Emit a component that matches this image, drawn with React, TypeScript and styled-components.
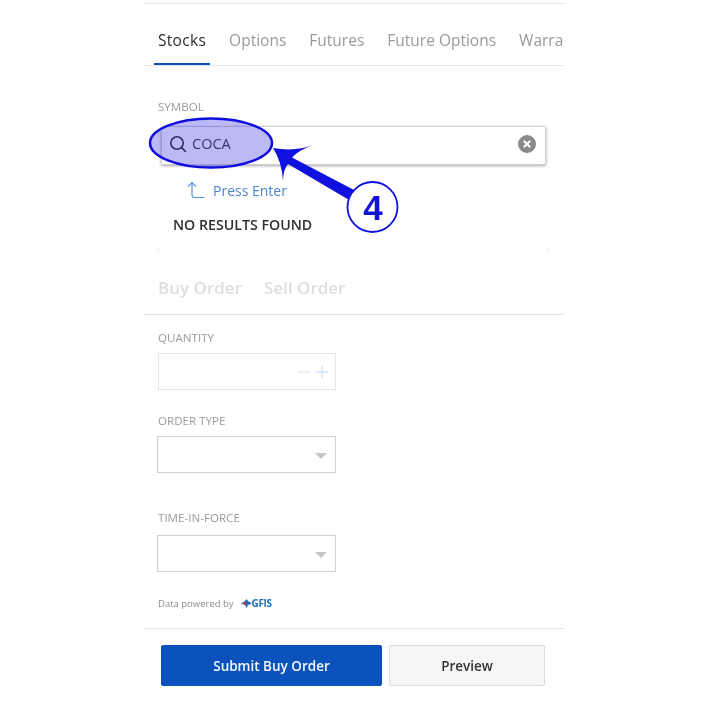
import styled, { createGlobalStyle } from "styled-components";

const GlobalStyle = createGlobalStyle`
  html, body {
    margin: 0;
    padding: 0;
    background: #fff;
  }
  body {
    font-family: "Open Sans", "Liberation Sans", sans-serif;
  }
`;

const Page = styled.div`
  position: relative;
  width: 705px;
  height: 705px;
  overflow: hidden;
  background: #fff;
  filter: blur(0.35px);
`;

const Panel = styled.div`
  width: 421px;
  margin-left: 143px;
  padding-top: 3px;
  display: flex;
  flex-direction: column;
`;

const TabBar = styled.div`
  height: 63px;
  box-sizing: border-box;
  border-top: 1px solid #e6e6e6;
  border-bottom: 1px solid #e2e4e8;
  padding-left: 11px;
  display: flex;
  overflow: hidden;
  white-space: nowrap;
`;

const Tab = styled.div<{ $active?: boolean }>`
  padding: 0 4px;
  margin-right: 15px;
  height: 62px;
  box-sizing: border-box;
  line-height: 72px;
  font-size: 15.5px;
  color: ${(p) => (p.$active ? "#2f2f33" : "#9a9a9a")};
  font-weight: ${(p) => (p.$active ? 500 : 400)};
  letter-spacing: ${(p) => (p.$active ? "0.3px" : "0")};
  border-bottom: ${(p) => (p.$active ? "3px solid #0b52bd" : "3px solid transparent")};
`;

const FieldLabel = styled.div<{ $top: number }>`
  margin-top: ${(p) => p.$top}px;
  margin-left: 15px;
  height: 12px;
  line-height: 12px;
  font-size: 11.6px;
  color: #9c9c9c;
`;

const SymbolInput = styled.div`
  margin: 13px 18px 0;
  height: 39px;
  box-sizing: border-box;
  border: 1px solid #cfcfcf;
  border-radius: 2px;
  box-shadow: 0 1px 3px rgba(0, 0, 0, 0.35);
  padding: 0 8px 4px 6px;
  display: flex;
  align-items: center;
`;

const SearchIcon = styled.svg`
  width: 20px;
  height: 20px;
  flex: none;
`;

const SymbolValue = styled.span`
  margin-left: 4px;
  flex: 1;
  font-size: 14.5px;
  color: #3d3d3d;
`;

const ClearIcon = styled.svg`
  width: 20px;
  height: 20px;
  flex: none;
`;

const Results = styled.div`
  position: relative;
  margin: 0 14px;
  height: 85px;
  box-sizing: border-box;
  padding: 14px 0 0 16px;

  &::before,
  &::after {
    content: "";
    position: absolute;
    bottom: 0;
    width: 2px;
    height: 1px;
    background: #e2e2e2;
  }
  &::before {
    left: 0;
  }
  &::after {
    right: 0;
  }
`;

const PressEnter = styled.div`
  display: flex;
  align-items: center;
  margin-left: 14px;
  height: 22px;
  font-size: 14px;
  color: #4a86d4;
  gap: 8px;
`;

const NoResults = styled.div`
  margin-top: 14px;
  height: 20px;
  line-height: 20px;
  font-size: 14.2px;
  font-weight: 600;
  color: #303030;
`;

const OrderTabs = styled.div`
  height: 65px;
  box-sizing: border-box;
  padding: 25px 0 0 15px;
  border-bottom: 1px solid #e4e4e4;
  display: flex;
  gap: 22px;
  font-size: 17px;
  font-weight: 600;
  line-height: 26px;
  color: #dedede;
`;

const QuantityBox = styled.div`
  margin: 9px 0 0 15px;
  width: 178px;
  height: 37px;
  box-sizing: border-box;
  border: 1px solid #e6e6e6;
  display: flex;
  align-items: center;
  justify-content: flex-end;
  padding-right: 7px;
  gap: 6px;
`;

const Stepper = styled.svg`
  width: 12px;
  height: 12px;
`;

const SelectBox = styled.div<{ $top: number }>`
  margin: ${(p) => p.$top}px 0 0 14px;
  width: 179px;
  height: 37px;
  box-sizing: border-box;
  border: 1.5px solid #d2d2d2;
  display: flex;
  align-items: center;
  justify-content: flex-end;
  padding-right: 8px;

  &::after {
    content: "";
    width: 0;
    height: 0;
    border-left: 6px solid transparent;
    border-right: 6px solid transparent;
    border-top: 6px solid #c6c6c6;
    margin-top: 2px;
  }
`;

const PoweredRow = styled.div`
  margin: 25px 0 0 15px;
  height: 12px;
  display: flex;
  align-items: center;
  gap: 7px;
  font-size: 9.5px;
  color: #8c8c8c;
`;

const GfisLogo = styled.span`
  display: inline-flex;
  align-items: center;
  font-size: 10px;
  font-weight: 700;
  letter-spacing: -0.4px;
  color: #1f6fb8;
`;

const ActionBar = styled.div`
  margin-top: 19px;
  border-top: 1px solid #e4e4e4;
  padding: 16px 19px 0 18px;
  display: flex;
  gap: 7px;
`;

const ActionButton = styled.div<{ $primary?: boolean }>`
  flex: ${(p) => (p.$primary ? "0 0 221px" : "1")};
  height: 41px;
  box-sizing: border-box;
  border-radius: 2px;
  display: flex;
  align-items: center;
  justify-content: center;
  font-size: 13.5px;
  font-weight: 600;
  background: ${(p) => (p.$primary ? "#0b52bd" : "#f6f6f6")};
  color: ${(p) => (p.$primary ? "#f4f7ff" : "#333")};
  border: 1px solid ${(p) => (p.$primary ? "#0b52bd" : "#dcdcdc")};
`;

const Annotation = styled.svg`
  position: absolute;
  inset: 0;
  width: 705px;
  height: 705px;
  pointer-events: none;
`;

const StepNumber = styled.div`
  position: absolute;
  left: 348px;
  top: 183px;
  width: 50px;
  height: 50px;
  line-height: 50px;
  text-align: center;
  font-family: "Liberation Sans", sans-serif;
  font-size: 35px;
  font-weight: 700;
  color: #1212d8;
`;

const App = () => {
  return (
    <Page>
      <GlobalStyle />
      <Panel>
        <TabBar>
          <Tab $active>Stocks</Tab>
          <Tab>Options</Tab>
          <Tab>Futures</Tab>
          <Tab>Future Options</Tab>
          <Tab>Warrants</Tab>
        </TabBar>

        <FieldLabel $top={35}>SYMBOL</FieldLabel>
        <SymbolInput>
          <SearchIcon viewBox="0 0 20 20" fill="none" stroke="#333" strokeWidth="1.6" strokeLinecap="round">
            <circle cx="9" cy="9" r="6.2" />
            <path d="M13.6 13.6 L17.5 17.5" />
          </SearchIcon>
          <SymbolValue>COCA</SymbolValue>
          <ClearIcon viewBox="0 0 20 20">
            <circle cx="10" cy="10" r="9" fill="#8a8a8a" />
            <path d="M6.8 6.8 L13.2 13.2 M13.2 6.8 L6.8 13.2" stroke="#fff" strokeWidth="2" />
          </ClearIcon>
        </SymbolInput>
        <Results>
          <PressEnter>
            <svg width="18" height="18" viewBox="0 0 18 18" fill="none" stroke="#5a94d8" strokeWidth="1.2">
              <path d="M1 5.5 L5 1.5 L9 5.5 M5 1.5 V14 Q5 16.5 7.5 16.5 H17.5" />
            </svg>
            Press Enter
          </PressEnter>
          <NoResults>NO RESULTS FOUND</NoResults>
        </Results>

        <OrderTabs>
          <span>Buy Order</span>
          <span>Sell Order</span>
        </OrderTabs>

        <FieldLabel $top={17}>QUANTITY</FieldLabel>
        <QuantityBox>
          <Stepper viewBox="0 0 12 12" stroke="#dfe6f2" strokeWidth="1.4">
            <path d="M0 6 H12" />
          </Stepper>
          <Stepper viewBox="0 0 12 12" stroke="#d3e0f5" strokeWidth="1.4">
            <path d="M0 6 H12 M6 0 V12" />
          </Stepper>
        </QuantityBox>

        <FieldLabel $top={25}>ORDER TYPE</FieldLabel>
        <SelectBox $top={9} />

        <FieldLabel $top={39}>TIME-IN-FORCE</FieldLabel>
        <SelectBox $top={11} />

        <PoweredRow>
          <span>Data powered by</span>
          <GfisLogo>
            <svg width="11" height="9" viewBox="0 0 11 9">
              <path d="M0 4.5 L4 2 L5.5 0 L7 2 L11 4.5 L7 6 L5.5 9 L4 6 Z" fill="#1f6fb8" />
              <path d="M1 4.5 L5 3 L5 6 Z" fill="#d8383a" />
            </svg>
            GFIS
          </GfisLogo>
        </PoweredRow>

        <ActionBar>
          <ActionButton $primary>Submit Buy Order</ActionButton>
          <ActionButton>Preview</ActionButton>
        </ActionBar>
      </Panel>

      <Annotation viewBox="0 0 705 705">
        <ellipse cx="211" cy="143" rx="61" ry="24.5" fill="rgba(40,30,230,0.31)" stroke="#0d0ddf" strokeWidth="2.5" />
        <path
          d="M273 148 Q296 152 314 144.5 Q299 150 292 157.5 L356 191 L350 200.5 L288 164 Q283 170 283 181 Q282 162 273 148 Z"
          fill="#1010e0"
        />
        <circle cx="372.5" cy="207" r="25" fill="#fff" stroke="#1010e0" strokeWidth="1.8" />
      </Annotation>
      <StepNumber>4</StepNumber>
    </Page>
  );
};

export default App;
